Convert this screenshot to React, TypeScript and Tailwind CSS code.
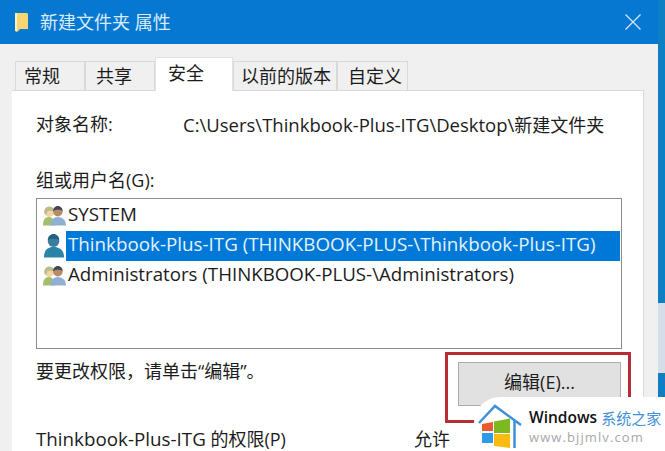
const font = "font-['Open_Sans','Noto_Sans_CJK_SC',sans-serif]";

const tabs = [
  { label: '常规', box: 'w-[70px] pl-[8px]' },
  { label: '共享', box: 'w-[70px] pl-[10px]' },
  { label: '安全', box: 'w-[78px] pl-[12px]', active: true },
  { label: '以前的版本', box: 'w-[104px] pl-[7px]' },
  { label: '自定义', box: 'w-[71px] pl-[10px]' },
];

function GroupIcon() {
  return (
    <svg width="23" height="22" viewBox="0 0 24 22" className="shrink-0">
      {/* left person */}
      <path d="M0 21c0-6 2-9 6-9s6 3 6 9z" fill="#a3bf6e" />
      <circle cx="6.500" cy="7" r="5" fill="#ecd8a4" />
      <path d="M1.500 8c-1-4 2-7 5-7s5 2 5 5c-2 0-5-1-7 0l-1 4z" fill="#bfb98c" />
      {/* right person */}
      <path d="M8 21c0-6 3-9 7.500-9S24 15 24 21z" fill="#8fb0d2" />
      <circle cx="15.500" cy="6.500" r="5" fill="#b98a68" />
      <path d="M10.500 6c0-3 2-5.500 5-5.500S20.500 3 20.500 6c-2-2-7-2-10 0z" fill="#3d4a55" />
    </svg>
  );
}

function UserIcon() {
  return (
    <svg width="23" height="26" viewBox="0 0 24 26" className="shrink-0">
      <path d="M1 25c0-8 4-11 10-11s11 3 11 11z" fill="#2b84a8" />
      <circle cx="11" cy="8" r="6" fill="#3a7f9f" />
      <path d="M5 7c0-4 3-6.500 6-6.500S17 3 17 7c-3-2-9-2-12 0z" fill="#235f80" />
    </svg>
  );
}

export default function App() {
  return (
    <div className={`relative flex h-[451px] w-[665px] overflow-hidden bg-[#f0f0f0] text-[#1c1c1c] ${font}`}>
      <div className="flex w-[658px] shrink-0 flex-col">
        {/* Title bar */}
        <div className="flex h-11 shrink-0 items-center justify-between bg-[#0678d2] pl-[15px] pr-[17px]">
          <div className="flex items-center gap-[11px]">
            <svg width="14" height="21" viewBox="0 0 14 21">
              <path d="M0 1h12l1 1v15H5l-3 3-2-1z" fill="#f7d672" />
              <path d="M0 1h2v18H0z" fill="#fdf0c0" />
            </svg>
            <span className="text-[18px] leading-none text-[#d9ecfa]">新建文件夹 属性</span>
          </div>
          <svg width="16" height="16" viewBox="0 0 16 16" stroke="#d8ebf9" strokeWidth="1.200">
            <path d="M0.500 0.500l15 15M15.500 0.500l-15 15" />
          </svg>
        </div>

        <div className="flex min-h-0 flex-1 flex-col pl-[12px] pr-[14px] pt-[13px]">
          {/* Tabs */}
          <div className="relative z-10 flex h-[33px] shrink-0 items-end pl-[3px]">
            {tabs.map((tab) =>
              tab.active ? (
                <div
                  key={tab.label}
                  className={`-mb-px flex h-[34px] items-center border-x border-t border-[#e2e2e2] bg-white pb-[3px] text-[18px] ${tab.box}`}
                >
                  {tab.label}
                </div>
              ) : (
                <div
                  key={tab.label}
                  className={`flex h-[29px] items-center border-x border-t border-[#d9d9d9] bg-[#f0f0f0] text-[18px] ${tab.box}`}
                >
                  {tab.label}
                </div>
              ),
            )}
          </div>

          {/* Panel */}
          <div className="flex min-h-0 flex-1 flex-col border-r border-t border-[#d9d9d9] bg-white pl-6 pr-[21px] pt-[20px]">
            <div className="flex h-[27px] shrink-0 items-center text-[18px]">
              <span className="w-[147px]">对象名称:</span>
              <span className="whitespace-nowrap">
                <span className="text-[18.500px]">C:\Users\Thinkbook-Plus-ITG\Desktop\</span>新建文件夹
              </span>
            </div>
            <div className="mt-[30px] flex h-[25px] shrink-0 items-center text-[18px]">组或用户名(G):</div>

            <div className="mt-[5px] h-[151px] shrink-0 border border-[#8c8c8c] pl-[6px] pr-px pt-[2px] text-[18.800px]">
              <div className="flex h-[30px] items-center">
                <GroupIcon />
                <span className="px-[2px] pb-[3px]">SYSTEM</span>
              </div>
              <div className="flex h-[30px] items-center">
                <UserIcon />
                <span className="flex h-full flex-1 items-center whitespace-nowrap bg-[#0078d7] px-[2px] pb-[3px] text-[#e4f2fc]">
                  Thinkbook-Plus-ITG (THINKBOOK-PLUS-\Thinkbook-Plus-ITG)
                </span>
              </div>
              <div className="flex h-[30px] items-center">
                <GroupIcon />
                <span className="whitespace-nowrap px-[2px] pb-[3px] text-[18.700px]">Administrators (THINKBOOK-PLUS-\Administrators)</span>
              </div>
            </div>

            <div className="mt-[13px] flex h-[44px] shrink-0 items-start justify-between pr-px">
              <span className="-mt-px text-[18px] leading-[21px]">要更改权限，请单击“编辑”。</span>
              <button className="h-[44px] w-[163px] border border-[#adadad] bg-[#e1e1e1] pb-[4px] text-[18px]">编辑(E)...</button>
            </div>

            <div className="mt-[19px] flex shrink-0 items-center text-[18px]">
              <span className="w-[378px] whitespace-nowrap">
                <span className="text-[18.800px]">Thinkbook-Plus-ITG</span> 的权限(P)
              </span>
              <span>允许</span>
            </div>
          </div>
        </div>
      </div>

      {/* Edge of the window behind */}
      <div className="flex flex-1 flex-col bg-[#0f7fc4] pt-[303px]">
        <div className="h-[70px] bg-[#d5dde6]" />
      </div>

      {/* Red annotation box */}
      <div className="absolute left-[445px] top-[352px] h-[71px] w-[186px] border-[3px] border-[#b92b36]" />

      {/* Watermark */}
      <div className="absolute bottom-0 right-0 flex h-[54px] w-[191px] items-center rounded-tl-[26px] bg-white pl-[2px]">
        <svg width="48" height="50" viewBox="0 0 48 50" className="shrink-0">
          <path d="M3 24L19 7 45 26" fill="none" stroke="#3f90da" strokeWidth="2.500" />
          <path d="M38.500 22v27" fill="none" stroke="#3f90da" strokeWidth="2.500" />
          <path d="M6 25l11-2v9H6z" fill="#ea5a2c" />
          <path d="M18 22.500l16-3V34H18z" fill="#7db81f" />
          <path d="M6 34h11v10H6z" fill="#2f9be8" />
          <path d="M18 35h16v14l-16-2z" fill="#fbbb12" />
        </svg>
        <div className="ml-[5px] flex flex-col pt-[6px]">
          <div className="flex items-center gap-[4px] whitespace-nowrap leading-none">
            <span className="text-[15.500px] font-semibold text-[#111]">Windows</span>
            <span className="text-[15px] text-[#3f90da]">系统之家</span>
          </div>
          <span className="mt-[5px] text-[13px] leading-none tracking-[1.100px] text-[#a8a8a8]">www.bjjmlv.com</span>
        </div>
      </div>
    </div>
  );
}
